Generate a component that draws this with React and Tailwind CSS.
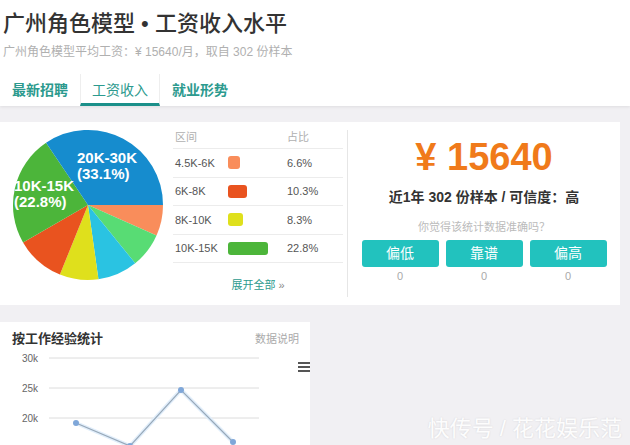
import React from 'react';

const SLICES = [
  { from: 0, to: 24, color: '#f98d5b' },
  { from: 24, to: 51, color: '#58dc74' },
  { from: 51, to: 82, color: '#2ac3e2' },
  { from: 82, to: 112, color: '#dfe01c' },
  { from: 112, to: 150, color: '#e9531f' },
  { from: 150, to: 236, color: '#4cb53a' },
  { from: 236, to: 360, color: '#168cce' },
];

const ROWS = [
  { range: '4.5K-6K', color: 'bg-[#f98d5b]', bar: 'w-[12px]', pct: '6.6%' },
  { range: '6K-8K', color: 'bg-[#e9531f]', bar: 'w-[19px]', pct: '10.3%' },
  { range: '8K-10K', color: 'bg-[#dfe01c]', bar: 'w-[15px]', pct: '8.3%' },
  { range: '10K-15K', color: 'bg-[#4cb53a]', bar: 'w-[40px]', pct: '22.8%' },
];

function slicePath(from, to, cx, cy, r) {
  const a0 = (from * Math.PI) / 180;
  const a1 = (to * Math.PI) / 180;
  const x0 = cx + r * Math.cos(a0);
  const y0 = cy + r * Math.sin(a0);
  const x1 = cx + r * Math.cos(a1);
  const y1 = cy + r * Math.sin(a1);
  const large = to - from > 180 ? 1 : 0;
  return `M${cx},${cy} L${x0},${y0} A${r},${r} 0 ${large} 1 ${x1},${y1} Z`;
}

function Pie() {
  return (
    <svg width="152" height="152" viewBox="0 0 152 152" className="shrink-0">
      {SLICES.map((s) => (
        <path key={s.from} d={slicePath(s.from, s.to, 76, 76, 75)} fill={s.color} />
      ))}
      <g fill="#fff" fontWeight="700" fontSize="15" fontFamily="Liberation Sans, sans-serif">
        <text x="65" y="34">20K-30K</text>
        <text x="65" y="50">(33.1%)</text>
        <text x="2" y="62">10K-15K</text>
        <text x="2" y="78">(22.8%)</text>
      </g>
    </svg>
  );
}

function Table() {
  return (
    <div className="ml-[9px] mt-[5px] w-[170px]">
      <div className="flex h-[22px] items-center border-b border-[#ececec] text-[11px] text-[#b0b0b0]">
        <span className="w-[114px] pl-[2px]">区间</span>
        <span>占比</span>
      </div>
      {ROWS.map((row) => (
        <div
          key={row.range}
          className="flex h-[28.5px] items-center border-b border-[#ececec] text-[11px] text-[#555]"
        >
          <span className="w-[55px] pl-[2px]">{row.range}</span>
          <span className="w-[59px]">
            <span className={`block h-[13px] rounded-[3px] ${row.color} ${row.bar}`} />
          </span>
          <span>{row.pct}</span>
        </div>
      ))}
      <div className="mt-[14px] text-center text-[11px] text-[#2c9a8e]">
        展开全部 <span className="text-[#888]">»</span>
      </div>
    </div>
  );
}

function Salary() {
  return (
    <div className="flex flex-1 flex-col items-center pt-[12px]">
      <div className="text-[38px] font-bold leading-[46px] text-[#f07a1a]">¥ 15640</div>
      <div className="mt-[8px] text-[14px] font-bold leading-[18px] text-[#333]">
        近1年 302 份样本 / 可信度：高
      </div>
      <div className="mt-[14px] text-[11px] leading-[14px] text-[#bbb]">你觉得该统计数据准确吗？</div>
      <div className="mt-[6px] flex gap-[7px]">
        {['偏低', '靠谱', '偏高'].map((label) => (
          <div key={label} className="flex w-[77px] flex-col items-center">
            <div className="flex h-[27px] w-full items-center justify-center rounded-[3px] bg-[#22c2be] text-[14px] text-white">
              {label}
            </div>
            <div className="mt-[2px] text-[11px] leading-[14px] text-[#aaa]">0</div>
          </div>
        ))}
      </div>
    </div>
  );
}

function ExperienceChart() {
  const pts = [
    [76, 101],
    [130, 124],
    [181, 68],
    [233, 120],
  ];
  const line = pts.map((p) => p.join(',')).join(' ');
  return (
    <div className="relative h-[123px] w-[310px] bg-white">
      <div className="flex items-center justify-between pl-[12px] pr-[11px] pt-[8px]">
        <span className="text-[13px] font-bold leading-[17px] text-[#333]">按工作经验统计</span>
        <span className="text-[11px] leading-[14px] text-[#aaa]">数据说明</span>
      </div>
      <svg width="310" height="123" viewBox="0 0 310 123" className="absolute left-0 top-0">
        <g stroke="#dcdcdc" strokeWidth="1">
          <line x1="49" y1="36" x2="259" y2="36" />
          <line x1="49" y1="66" x2="259" y2="66" />
          <line x1="49" y1="96" x2="259" y2="96" />
        </g>
        <g fill="#666" fontSize="10" fontFamily="Liberation Sans, sans-serif" textAnchor="end">
          <text x="38" y="40">30k</text>
          <text x="38" y="70">25k</text>
          <text x="38" y="100">20k</text>
        </g>
        <polyline points={line} fill="none" stroke="#e1eefb" strokeWidth="4" />
        <polyline points={line} fill="none" stroke="#97a8b8" strokeWidth="1.2" />
        {pts.map(([x, y]) => (
          <circle key={x} cx={x} cy={y} r="3" fill="#7fa7d9" />
        ))}
        <g fill="#555">
          <rect x="298" y="40" width="12" height="2" />
          <rect x="298" y="44" width="12" height="2" />
          <rect x="298" y="48" width="12" height="2" />
        </g>
      </svg>
    </div>
  );
}

export default function App() {
  return (
    <div className="relative h-[445px] w-[630px] overflow-hidden bg-[#f1f0f3] font-['Liberation_Sans','Noto_Sans_CJK_SC',sans-serif]">
      <div className="bg-white shadow-[0_1px_3px_rgba(0,0,0,0.08)]">
        <h1 className="pl-[3px] pt-[10px] text-[22px] font-medium leading-[28px] text-[#333]">
          广州角色模型 • 工资收入水平
        </h1>
        <p className="mt-[6px] pl-[3px] text-[12px] leading-[16px] text-[#b0b0b0]">
          广州角色模型平均工资：¥ 15640/月，取自 302 份样本
        </p>
        <div className="mt-[14px] flex h-[32px] text-[14px]">
          <div className="flex w-[80px] items-center justify-center font-bold text-[#2c9a8e]">最新招聘</div>
          <div className="flex w-[80px] items-center justify-center border-x border-[#eee] border-b-[3px] border-b-[#1b8f89] pt-[3px] text-[#2c9a8e]">
            工资收入
          </div>
          <div className="flex w-[80px] items-center justify-center font-bold text-[#2c9a8e]">就业形势</div>
        </div>
      </div>

      <div className="mt-[16px] flex h-[183px] w-[620px] bg-white">
        <div className="pl-[12px] pt-[7px]">
          <Pie />
        </div>
        <Table />
        <div className="my-[8px] ml-[4px] w-px bg-[#e6e6e6]" />
        <Salary />
      </div>

      <div className="mt-[17px]">
        <ExperienceChart />
      </div>

      <div className="absolute bottom-[2px] right-[8px] text-[22px] leading-[28px] text-white/95 [text-shadow:0_0_2px_rgba(0,0,0,0.12)]">
        快传号 / 花花娱乐范
      </div>
    </div>
  );
}
